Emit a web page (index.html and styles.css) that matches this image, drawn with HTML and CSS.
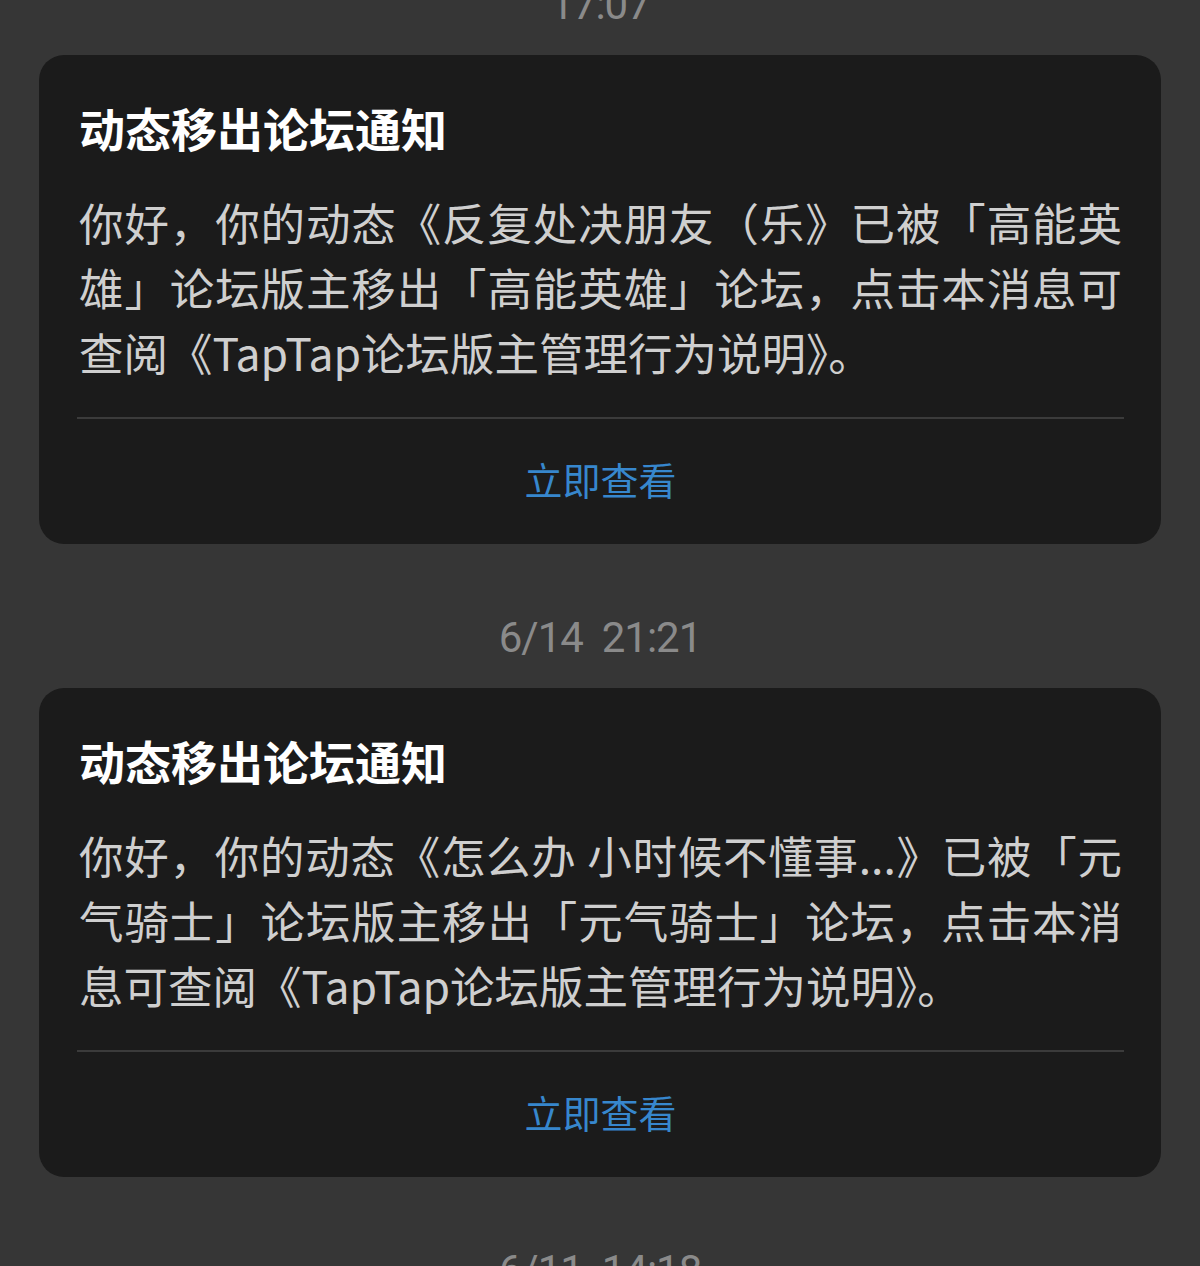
FILE: index.html
```html
<!DOCTYPE html>
<html lang="zh-CN">
<head>
    <meta charset="UTF-8">
    <meta name="viewport" content="width=device-width, initial-scale=1.0">
    <title>消息通知</title>
    <link rel="stylesheet" href="styles.css">
</head>
<body>
    <div class="feed">
        <div class="item">
            <div class="time">17:07</div>
            <div class="card">
                <h2 class="card-title">动态移出论坛通知</h2>
                <p class="card-text">你好，你的动态《反复处决朋友（乐》已被「高能英雄」论坛版主移出「高能英雄」论坛，点击本消息可查阅《TapTap论坛版主管理行为说明》。</p>
                <div class="divider"></div>
                <a class="card-action" href="#">立即查看</a>
            </div>
        </div>

        <div class="item">
            <div class="time">6/14&nbsp;&nbsp;21:21</div>
            <div class="card">
                <h2 class="card-title">动态移出论坛通知</h2>
                <p class="card-text">你好，你的动态《怎么办 小时候不懂事...》已被「元气骑士」论坛版主移出「元气骑士」论坛，点击本消息可查阅《TapTap论坛版主管理行为说明》。</p>
                <div class="divider"></div>
                <a class="card-action" href="#">立即查看</a>
            </div>
        </div>

        <div class="item">
            <div class="time">6/11&nbsp;&nbsp;14:18</div>
        </div>
    </div>
</body>
</html>
```

FILE: styles.css
```css
:root {
    --bg-color: #363636;
    --card-color: #1b1b1b;
    --text-color: #cfcfcf;
    --muted-color: #8a8a8a;
    --link-color: #3787cd;
    --line-color: #3b3b3b;
}

* {
    margin: 0;
    padding: 0;
    box-sizing: border-box;
}

html, body {
    height: 100%;
    overflow: hidden;
}

body {
    font-family: "Noto Sans CJK SC", "Noto Sans", sans-serif;
    background-color: var(--bg-color);
    color: var(--text-color);
}

/* list is scrolled: first timestamp is half out of view */
.feed {
    margin-top: -89px;
    padding: 0 39px;
}

.time {
    margin-top: 68px;
    height: 50px;
    display: flex;
    align-items: center;
    justify-content: center;
    font-family: Roboto, "Noto Sans", sans-serif;
    font-size: 42px;
    letter-spacing: -1px;
    color: var(--muted-color);
}

.card {
    margin-top: 26px;
    background-color: var(--card-color);
    border-radius: 25px;
    padding: 42px 39px 0 40px;
}

.card-title {
    font-size: 46px;
    font-weight: 700;
    line-height: 60px;
    color: #ffffff;
}

.card-text {
    margin-top: 32px;
    font-size: 44.5px;
    line-height: 65px;
    text-align: justify;
}

.divider {
    margin: 33px -2px 0 -2px;
    height: 2px;
    background-color: var(--line-color);
}

.card-action {
    display: flex;
    align-items: center;
    justify-content: center;
    height: 125px;
    padding-bottom: 6px;
    font-size: 38px;
    color: var(--link-color);
    text-decoration: none;
}
```
